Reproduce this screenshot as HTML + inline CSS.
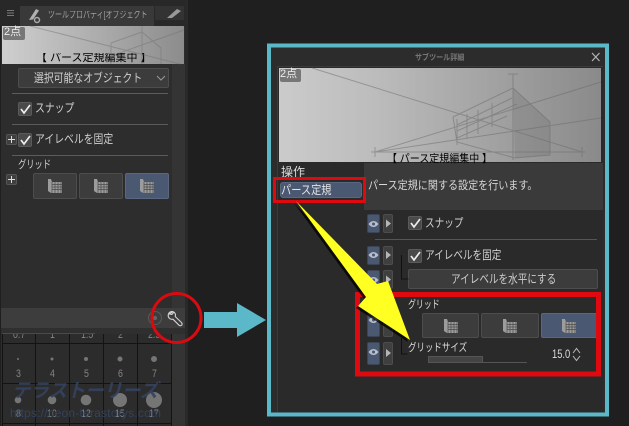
<!DOCTYPE html>
<html><head><meta charset="utf-8">
<style>
html,body{margin:0;padding:0;background:#1f1f1f}
#p{position:relative;width:629px;height:426px;overflow:hidden;background:#1f1f1f;font-family:"Liberation Sans","Noto Sans CJK JP",sans-serif;color:#d0d0d0}
#p div{position:absolute;box-sizing:border-box;white-space:nowrap}
.t{position:absolute;line-height:1;white-space:nowrap;transform-origin:left top}
.s{font-size:12px;transform:scaleX(.82)}
.n{font-size:11px;color:#858585;transform:scaleX(.8)}
.btn{background:#3c3c3c;border:1px solid #4d4d4d;border-radius:2px}
.sel{background:#4b5871;border:1px solid #5a6780;border-radius:2px}
.chk{width:14px;height:14px;background:#4a4a4a;border:1px solid #5a5a5a;border-radius:2px}
.ln{height:1px;background:#5c5c5c}
.eye{width:13px;height:19px;background:#4b5871;border:1px solid #3b4556;border-radius:2px}
.ar{width:10px;height:19px;background:#3f3f3f;border:1px solid #4d4d4d;border-radius:2px}
.plus{width:11px;height:11px;background:#3f3f3f;border:1px solid #555;border-radius:2px}
svg{position:absolute;left:0;top:0;overflow:visible}
</style></head><body><div id="p">

<!-- left panel -->
<div style="left:1px;top:0;width:184px;height:426px;background:#2d2d2d"></div>
<div style="left:172px;top:64px;width:13px;height:362px;background:#343434"></div>
<div style="left:185px;top:0;width:3px;height:426px;background:#292929"></div>
<div style="left:0;top:0;width:185px;height:26px;background:#282828"></div>
<div style="left:20px;top:6px;width:134px;height:20px;background:#393939"></div>
<div style="left:155px;top:6px;width:29px;height:14px;background:#333"></div>
<span class="t" style="left:48px;top:11px;font-size:10px;color:#a0a0a0;transform:scaleX(.7);width:143px;overflow:hidden">ツールプロパティ[オブジェクト</span>

<!-- preview small -->
<div style="left:2px;top:26px;width:182px;height:38px;background:linear-gradient(90deg,#cfcfcf,#b5b5b5 40%,#8c8c8c)"></div>
<div style="left:3px;top:27px;width:22px;height:13px;background:#777;border-radius:2px"></div>
<span class="t" style="left:4px;top:27px;font-size:11px;color:#eee">2点</span>
<span class="t" style="left:36px;top:53px;font-size:11px;color:#000;height:11px;overflow:hidden">【 パース定規編集中 】</span>

<!-- dropdown -->
<div class="btn" style="left:18px;top:68px;width:151px;height:20px"></div>
<span class="t s" style="left:34px;top:72px">選択可能なオブジェクト</span>
<div class="ln" style="left:12px;top:93px;width:156px"></div>
<div class="chk" style="left:18px;top:102px"></div>
<span class="t s" style="left:35px;top:102px">スナップ</span>
<div class="ln" style="left:12px;top:124px;width:156px"></div>
<div class="plus" style="left:6px;top:134px"></div>
<div class="chk" style="left:18px;top:133px"></div>
<span class="t s" style="left:35px;top:133px">アイレベルを固定</span>
<div class="ln" style="left:12px;top:155px;width:156px"></div>
<span class="t" style="left:18px;top:160px;font-size:11px;transform:scaleX(.75)">グリッド</span>
<div class="plus" style="left:6px;top:174px"></div>
<div class="btn" style="left:33px;top:173px;width:44px;height:26px"></div>
<div class="btn" style="left:79px;top:173px;width:44px;height:26px"></div>
<div class="sel" style="left:125px;top:173px;width:44px;height:26px"></div>

<!-- bottom bar -->
<div style="left:1px;top:308px;width:184px;height:20px;background:#3d3d3d"></div>

<!-- brush grid -->
<div style="left:2px;top:334px;width:170px;height:92px;background:#2c2c2c"></div>
<span class="t n" style="left:13px;top:330px">0.7</span>
<span class="t n" style="left:50px;top:330px">1</span>
<span class="t n" style="left:81px;top:330px">1.5</span>
<span class="t n" style="left:118px;top:330px">2</span>
<span class="t n" style="left:148px;top:330px">2.5</span>
<span class="t n" style="left:16px;top:369px">3</span>
<span class="t n" style="left:50px;top:369px">4</span>
<span class="t n" style="left:84px;top:369px">5</span>
<span class="t n" style="left:118px;top:369px">6</span>
<span class="t n" style="left:152px;top:369px">7</span>
<span class="t n" style="left:16px;top:409px">8</span>
<span class="t n" style="left:47px;top:409px">10</span>
<span class="t n" style="left:81px;top:409px">12</span>
<span class="t n" style="left:115px;top:409px">15</span>
<span class="t n" style="left:149px;top:409px">17</span>
<div style="left:1px;top:328px;width:184px;height:6px;background:#2f2f2f"></div>

<!-- dialog -->
<div style="left:271px;top:47px;width:334px;height:366px;background:#2c2c2c"></div>
<div style="left:277px;top:66px;width:326px;height:346px;background:#2a2a2a;border-left:1px solid #3a3a3a;border-top:1px solid #3a3a3a"></div>
<span class="t" style="left:415px;top:54px;font-size:8px;color:#777;font-weight:bold;transform:scaleX(.88)">サブツール詳細</span>

<!-- big preview -->
<div style="left:279px;top:68px;width:322px;height:94px;background:linear-gradient(90deg,#cbcbcb,#bcbcbc 30%,#8a8a8a)"></div>
<div style="left:364px;top:163px;width:239px;height:47px;background:#3a3a3a"></div>
<div style="left:280px;top:69px;width:21px;height:13px;background:#777;border-radius:2px"></div>
<span class="t" style="left:280px;top:69px;font-size:11px;color:#eee">2点</span>

<span class="t" style="left:281px;top:166px;font-size:12px;color:#ddd">操作</span>
<div class="sel" style="left:280px;top:182px;width:82px;height:16px;border-radius:3px"></div>
<span class="t s" style="left:281px;top:184px;color:#e4e4e4;transform:scaleX(.85)">パース定規</span>
<span class="t" style="left:368px;top:181px;font-size:11.4px;color:#d8d8d8;transform:scaleX(.883)">パース定規に関する設定を行います。</span>

<div class="eye" style="left:367px;top:214px"></div><div class="ar" style="left:383px;top:214px"></div>
<div class="chk" style="left:408px;top:216px"></div>
<span class="t s" style="left:425px;top:217px;transform:scaleX(.8)">スナップ</span>
<div class="ln" style="left:375px;top:239px;width:222px;background:#555"></div>

<div class="eye" style="left:367px;top:246px"></div><div class="ar" style="left:383px;top:246px"></div>
<div class="chk" style="left:408px;top:249px"></div>
<span class="t s" style="left:425px;top:249px;transform:scaleX(.8)">アイレベルを固定</span>
<div class="eye" style="left:367px;top:270px"></div><div class="ar" style="left:383px;top:270px"></div>
<div class="btn" style="left:408px;top:269px;width:190px;height:20px"></div>
<span class="t s" style="left:451px;top:273px;color:#ccc;transform:scaleX(.8)">アイレベルを水平にする</span>

<div class="eye" style="left:367px;top:305px;height:32px"></div><div class="ar" style="left:383px;top:305px;height:32px"></div>
<div class="eye" style="left:367px;top:342px;height:23px"></div><div class="ar" style="left:383px;top:342px;height:23px"></div>

<span class="t" style="left:408px;top:300px;font-size:11px;color:#ddd;transform:scaleX(.72)">グリッド</span>
<div class="btn" style="left:422px;top:313px;width:57px;height:25px"></div>
<div class="btn" style="left:481px;top:313px;width:58px;height:25px"></div>
<div class="sel" style="left:541px;top:313px;width:56px;height:25px"></div>
<span class="t" style="left:408px;top:343px;font-size:11px;color:#ddd;transform:scaleX(.77)">グリッドサイズ</span>
<div style="left:428px;top:356px;width:99px;height:7px;border-bottom:1px solid #555"></div>
<div style="left:428px;top:356px;width:55px;height:7px;background:#444;border:1px solid #555"></div>
<span class="t" style="left:552px;top:348px;font-size:12px;color:#ddd;transform:scaleX(.78)">15.0</span>

<svg width="629" height="426" viewBox="0 0 629 426">
  <!-- tab icons -->
  <path d="M7 10.500h7M7 13h7M7 15.500h7" fill="none" stroke="#777"/>
  <path d="M29 20l7-11 3 1.500-6 9z" fill="#b0b0b0"/><circle cx="37" cy="20" r="2.500" fill="none" stroke="#aaa" stroke-width="1.500"/>
  <path d="M167 18l10-9 4 2-9 7z" fill="#999"/>
  <!-- dropdown chevron -->
  <path d="M157 76l4 4 4-4" fill="none" stroke="#999"/>
  <!-- checks -->
  <g fill="none" stroke="#eee" stroke-width="1.700">
    <path d="M21 109l3 4 6-8"/><path d="M21 140l3 4 6-8"/>
    <path d="M411 223l3 4 6-8"/><path d="M411 256l3 4 6-8"/>
  </g>
  <!-- plus -->
  <path d="M8 139.500h7M11.500 136v7M8 179.500h7M11.500 176v7" stroke="#ddd"/>
  <!-- grid icons -->
  <defs><g id="g"><path d="M0 0h3l1 3h10v11H3L0 12z" fill="#9c9c9c"/><path d="M4 3v11M7 3v11M10 3v11M13 3v11M4 5.500h10M4 8h10M4 10.500h10" fill="none" stroke="#4a4a4a" stroke-width=".7"/></g></defs>
  <use href="#g" x="48" y="179"/><use href="#g" x="94" y="179"/><use href="#g" x="140" y="179"/>
  <use href="#g" x="444" y="319"/><use href="#g" x="503" y="319"/><use href="#g" x="562" y="319"/>
  <!-- small preview perspective -->
  <g fill="none" stroke="#6e6e6e" opacity=".45">
    <path d="M30 26l150 38M111 43l31-11 19 16v16M111 43v21M142 32v32M184 30l-73 26M142 26v6"/>
  </g>
  <!-- big preview perspective -->
  <path d="M513 88l37 34v33l-35 3z" fill="#666" opacity=".22"/>
  <g fill="none" stroke="#6a6a6a" opacity=".5">
    <path d="M312 68l270 84M375 152L601 82M375 152L601 118M371 152h214M513 74v86M508 74h10M375 147v10M582 147v10"/>
    <path d="M453 117l60-29 37 34v33l-35 3-58-16zM453 117l4 25"/>
    <path d="M457 119v26M467 114v25M478 110v24M492 103v24M457 125l55-27M457 131l60-27M457 138l50-22"/>
  </g>
  <!-- wrench & dial -->
  <circle cx="155" cy="318" r="6.500" fill="none" stroke="#5a5a5a"/>
  <circle cx="155" cy="318" r="2" fill="#666"/>
  <path d="M173 311.500c-2.600-.5-5 1.500-4.800 4.300.2 2.600 2.600 4 4.800 3.400l6 6c1 .9 2.600.5 3-.5.3-.9 0-1.800-.7-2.300l-6-5.800c.5-2-.1-3.500-1.400-4.500l-2.100 2.400-2.300-.5z" fill="none" stroke="#cfcfcf" stroke-width="1.100" stroke-linejoin="round"/>
  <!-- close -->
  <path d="M592 53l7.500 8M599.500 53l-7.500 8" stroke="#b5b5b5" stroke-width="1.200"/>
  <!-- brush grid lines -->
  <g stroke="#131313">
    <path d="M2.500 334v92M35.500 334v92M69.500 334v92M103.500 334v92M137.500 334v92M171.500 334v92"/>
    <path d="M2 343.500h170M2 383.500h170M2 423.500h170"/>
  </g>
  <path d="M2 333.500h93" stroke="#4a4a4a"/>
  <!-- dots -->
  <g fill="#757575">
    <circle cx="18" cy="359" r="1"/><circle cx="52" cy="359" r="1.500"/><circle cx="86" cy="359" r="2"/><circle cx="120" cy="359" r="2.500"/><circle cx="154" cy="359" r="3"/>
    <circle cx="18" cy="400" r="3.300"/><circle cx="52" cy="400" r="4.300"/><circle cx="86" cy="400" r="5.300"/><circle cx="120" cy="400" r="7"/><circle cx="154" cy="400" r="8"/>
  </g>
  <!-- watermark -->
  <text x="12" y="397" font-family="Liberation Sans,Noto Sans CJK JP,sans-serif" font-size="19" font-weight="bold" font-style="italic" fill="#33425f" fill-opacity=".9" textLength="146" lengthAdjust="spacingAndGlyphs">テラストーリーズ</text>
  <text x="10" y="417" font-family="Liberation Sans,sans-serif" font-size="12" fill="#33425f" textLength="151" lengthAdjust="spacing">https://neon-terastorys.com</text>
  <!-- red circle -->
  <circle cx="176.500" cy="318" r="24.500" fill="none" stroke="#d90a10" stroke-width="3"/>
  <!-- teal arrow -->
  <path d="M204 312h33v-9l29 17-29 17v-9h-33z" fill="#5bb8c8"/>
  <!-- teal frame -->
  <rect x="269" y="45.500" width="338" height="369" fill="none" stroke="#5bb8c8" stroke-width="4"/>
  <!-- big preview caption over lines -->
  <text x="387" y="162" font-family="Liberation Sans,Noto Sans CJK JP,sans-serif" font-size="11" fill="#000" textLength="105" lengthAdjust="spacingAndGlyphs">【 パース定規編集中 】</text>
  <!-- dialog tree lines -->
  <path d="M401.500 255v24h7M401.500 338v16h6" fill="none" stroke="#111"/>
  <!-- eyes and arrows -->
  <g fill="#b9bfca">
    <path d="M368.500 224c3-4 7-4 10 0-3 4-7 4-10 0z"/><path d="M368.500 255c3-4 7-4 10 0-3 4-7 4-10 0z"/><path d="M368.500 280c3-4 7-4 10 0-3 4-7 4-10 0z"/><path d="M368.500 320c3-4 7-4 10 0-3 4-7 4-10 0z"/><path d="M368.500 352c3-4 7-4 10 0-3 4-7 4-10 0z"/>
  </g>
  <g fill="#4b5871"><circle cx="373.500" cy="224" r="1.500"/><circle cx="373.500" cy="255" r="1.500"/><circle cx="373.500" cy="280" r="1.500"/><circle cx="373.500" cy="320" r="1.500"/><circle cx="373.500" cy="352" r="1.500"/></g>
  <path d="M386 219.500l5 4-5 4zM386 251l5 4-5 4zM386 275.500l5 4-5 4zM386 349l5 4-5 4z" fill="#b5b5b5"/>
  <!-- spinner -->
  <path d="M573 353l3.500-4.500 3.500 4.500M573 356l3.500 4.500 3.500-4.500" fill="none" stroke="#bbb"/>
  <!-- red frames -->
  <rect x="274.500" y="178.500" width="90" height="23" fill="none" stroke="#de0a10" stroke-width="3"/>
  <rect x="357.500" y="294.500" width="241" height="79.500" fill="none" stroke="#de0a10" stroke-width="5"/>
  <!-- yellow arrow -->
  <path d="M296 201l81 83 11-3 22 59-52-34 8-9z" fill="#000" opacity=".75" transform="translate(-2,2)"/>
  <path d="M296 201l81 83 11-3 22 59-52-34 8-9z" fill="#ffff22"/>
</svg>
</div></body></html>
